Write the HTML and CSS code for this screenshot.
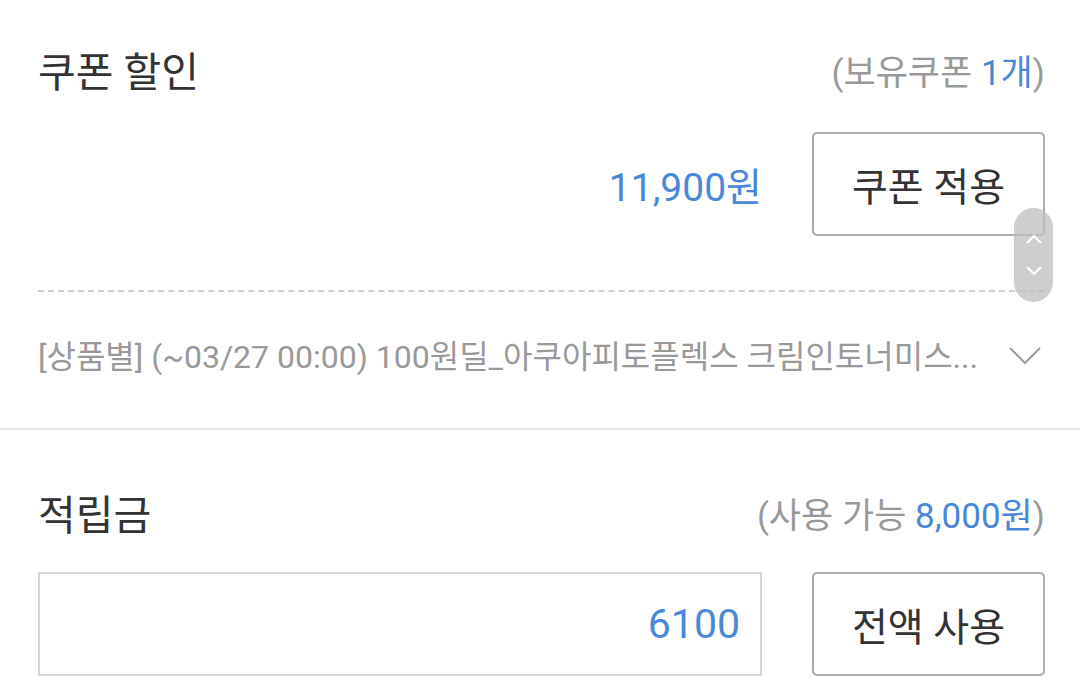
FILE: index.html
```html
<!DOCTYPE html>
<html lang="ko">
<head>
    <meta charset="UTF-8">
    <meta name="viewport" content="width=device-width, initial-scale=1.0">
    <title>쿠폰 / 적립금</title>
    <link rel="stylesheet" href="styles.css">
</head>
<body>
    <div class="section coupon">
        <div class="section-head">
            <h2>쿠폰 할인</h2>
            <span class="sub">(보유쿠폰 <em>1개</em>)</span>
        </div>
        <div class="action-row">
            <span class="amount">11,900원</span>
            <button type="button" class="btn">쿠폰 적용</button>
        </div>
        <div class="coupon-detail">
            <span class="coupon-name">[상품별] (~03/27 00:00) 100원딜_아쿠아피토플렉스 크림인토너미스...</span>
            <svg class="chevron" width="32" height="18" viewBox="0 0 32 18">
                <polyline points="1,1 16,16 31,1" fill="none" stroke="#9a9a9a" stroke-width="2"/>
            </svg>
        </div>
    </div>

    <div class="section points">
        <div class="section-head">
            <h2>적립금</h2>
            <span class="sub">(사용 가능 <em>8,000원</em>)</span>
        </div>
        <div class="action-row">
            <input type="text" class="point-input" value="6100">
            <button type="button" class="btn">전액 사용</button>
        </div>
    </div>

    <div class="scroll-thumb">
        <svg width="16" height="10" viewBox="0 0 16 10"><polyline points="1,9 8,2 15,9" fill="none" stroke="#fff" stroke-width="2"/></svg>
        <svg width="16" height="10" viewBox="0 0 16 10"><polyline points="1,1 8,8 15,1" fill="none" stroke="#fff" stroke-width="2"/></svg>
    </div>
</body>
</html>
```

FILE: styles.css
```css
body {
    font-family: Roboto, "Noto Sans CJK KR", sans-serif;
    background-color: #FFFFFF;
    color: #333333;
    margin: 0;
    width: 1080px;
    height: 696px;
    overflow: hidden;
    position: relative;
}

.section {
    padding: 0 35px 0 38px;
}

.coupon {
    padding-top: 28px;
    border-bottom: 2px solid #E8E8E8;
}

.points {
    padding-top: 41px;
}

.section-head {
    display: flex;
    justify-content: space-between;
    align-items: center;
    height: 82px;
}

h2 {
    margin: 0;
    font-size: 41px;
    font-weight: 400;
    color: #333333;
}

.sub {
    font-size: 35px;
    color: #999999;
}

.sub em {
    font-style: normal;
    color: #4A87D8;
}

.action-row {
    display: flex;
    justify-content: flex-end;
    align-items: center;
    gap: 50px;
    margin-top: 22px;
    height: 104px;
}

.points .action-row {
    margin-top: 19px;
}

.amount {
    font-size: 39px;
    color: #4A87D8;
}

.btn {
    width: 233px;
    height: 104px;
    background: #FFFFFF;
    border: 2px solid #ABABAB;
    border-radius: 5px;
    font-family: Roboto, "Noto Sans CJK KR", sans-serif;
    font-size: 39px;
    color: #333333;
    padding: 0;
}

.coupon-detail {
    display: flex;
    align-items: center;
    margin-top: 54px;
    border-top: 2px dashed #D0D0D0;
    height: 138px;
    box-sizing: border-box;
    padding-bottom: 12px;
}

.coupon-name {
    flex: 1;
    min-width: 0;
    white-space: nowrap;
    font-size: 32px;
    color: #999999;
}

.chevron {
    margin-right: 4px;
    margin-top: 4px;
}

.point-input {
    flex: 1;
    height: 104px;
    box-sizing: border-box;
    border: 2px solid #D6D6D6;
    padding: 0 20px;
    text-align: right;
    font-family: Roboto, "Noto Sans CJK KR", sans-serif;
    font-size: 41px;
    color: #4A87D8;
    outline: none;
}

.scroll-thumb {
    position: absolute;
    left: 1014px;
    top: 208px;
    width: 39px;
    height: 94px;
    border-radius: 20px;
    background: rgba(190, 190, 190, 0.75);
    display: flex;
    flex-direction: column;
    align-items: center;
    justify-content: center;
    gap: 22px;
}
```
